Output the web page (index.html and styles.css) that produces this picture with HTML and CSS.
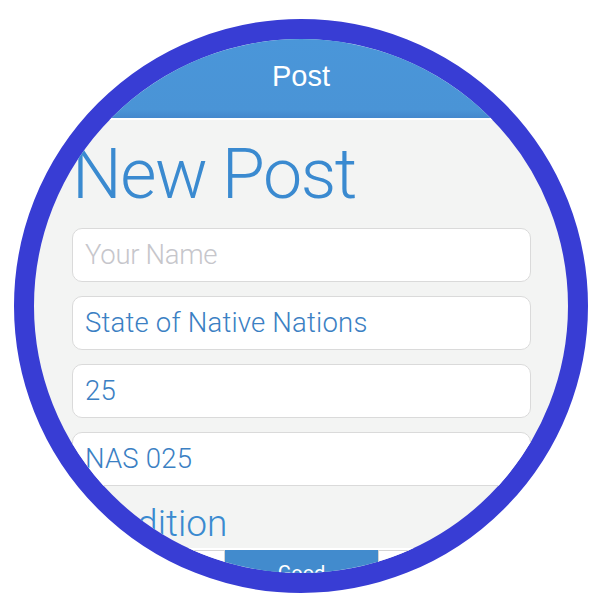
FILE: index.html
```html
<!DOCTYPE html>
<html>
<head>
<meta charset="utf-8">
<link rel="stylesheet" href="styles.css">
</head>
<body>
<div class="ring">
  <div class="screen">
    <header class="navbar">Post</header>
    <main class="content">
      <h1 class="title">New Post</h1>
      <div class="field placeholder">Your Name</div>
      <div class="field">State of Native Nations</div>
      <div class="field">25</div>
      <div class="field">NAS 025</div>
      <h2 class="subtitle">Condition</h2>
      <div class="segments">
        <div class="seg">New</div>
        <div class="seg active">Good</div>
        <div class="seg">Fair</div>
      </div>
    </main>
  </div>
</div>
</body>
</html>
```
FILE: styles.css
```css
html, body {
  margin: 0;
  padding: 0;
  background: #ffffff;
}
body {
  width: 601px;
  height: 606px;
  overflow: hidden;
  font-family: Roboto, "Liberation Sans", sans-serif;
}
.ring {
  width: 534px;
  height: 534px;
  margin: 19px 0 0 14px;
  border: 20px solid #383dd4;
  border-radius: 50%;
  overflow: hidden;
  background: #f3f4f3;
}
.screen {
  width: 534px;
}
.navbar {
  box-sizing: border-box;
  height: 81px;
  padding-bottom: 5px;
  line-height: 74px;
  text-align: center;
  color: #ffffff;
  font-family: "Liberation Sans", Arial, sans-serif;
  font-size: 29px;
  background: linear-gradient(#4a96d9 0%, #4a94d6 90%, #4488cd 100%);
  border-bottom: 2px solid #ffffff;
}
.content {
  padding: 0 37px 0 38px;
}
.title {
  margin: 19px 0 19px;
  font-size: 70px;
  line-height: 70px;
  font-weight: 300;
  color: #3a8ad0;
  letter-spacing: -1.5px;
}
.field {
  box-sizing: border-box;
  height: 54px;
  margin-bottom: 14px;
  padding: 0 12px;
  border: 1.5px solid #dadada;
  border-radius: 10px;
  background: #ffffff;
  font-size: 27.5px;
  line-height: 51px;
  font-weight: 300;
  color: #3b80c3;
  letter-spacing: 0.2px;
}
.field.placeholder {
  color: #c6c6cb;
  letter-spacing: -0.3px;
}
.subtitle {
  margin: 19px 0 6px;
  font-size: 37px;
  line-height: 37px;
  font-weight: 300;
  color: #3a8ad0;
}
.segments {
  display: grid;
  grid-template-columns: 1fr 1fr 1fr;
  border-top: 2px solid #ffffff;
  height: 46px;
}
.seg {
  border: 1px solid #d4d4d4;
  background: #ffffff;
  color: #3b80c3;
  font-size: 20px;
  line-height: 44px;
  text-align: center;
}
.seg.active {
  background: #428bcd;
  border-color: #428bcd;
  color: #ffffff;
}
```
